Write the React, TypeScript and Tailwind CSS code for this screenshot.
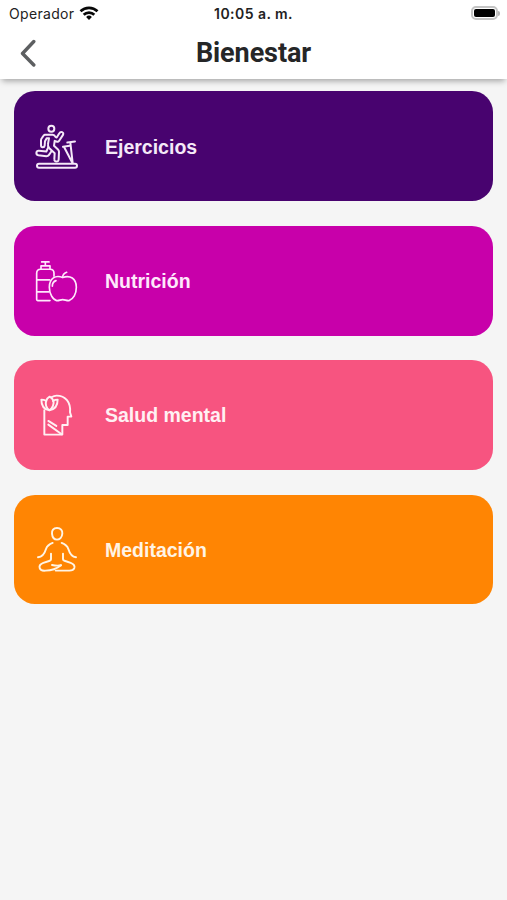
import React from "react";

type WellnessItem = {
  title: string;
  color: string;
  titleClass: string;
  icon: React.ReactNode;
};

type IconProps = {
  viewBox: string;
  strokeWidth?: number;
  children: React.ReactNode;
};

const LineIcon = ({ viewBox, strokeWidth = 6, children }: IconProps) => (
  <svg viewBox={viewBox} className="h-[60px] w-[60px] shrink-0" fill="none" stroke="currentColor" strokeWidth={strokeWidth} strokeLinecap="round" strokeLinejoin="round" aria-hidden="true">
    {children}
  </svg>
);

const TreadmillIcon = () => (
  <LineIcon viewBox="0 2.5 180 180">
    <circle cx="70" cy="41" r="9" />
    <path d="M50 59h24c4 0 7 3 9 7l3 1 8-13c4-7 15-3 11 5L94 76c-2 4-6 5-9 3l-5-2-2 15 12 11c2 2 3 4 3 7l-1 23c-1 9-14 8-13-1l1-18-16-15c-4-4-5-7-4-12l3-18h-7l-5 9-1 13c-1 7-11 7-11-1V75c0-3 1-5 3-7l5-7c1-1 2-2 4-2z" />
    <path d="M60 98l-5 11-22-2c-9-1-11 11-2 13l24 3c3 0 6-1 8-4l7-10" />
    <rect x="27" y="146" width="120" height="12" rx="6" />
    <path d="M141 79l-23 3M127 82l7 61M105 95l20-3M109 97l24 46" />
  </LineIcon>
);

const NutritionIcon = () => (
  <LineIcon viewBox="0 2.2 180 180" strokeWidth={5}>
    <path d="M41 35h22M52 35v11M39 57V47h27v10" />
    <path d="M66 151H29c-2 0-3-1-3-3V69c0-8 5-12 12-12h28c8 0 12 4 12 12v9M26 89h39M26 125h36" />
    <path d="M104 82c-21-9-40 2-40 29 0 19 10 37 22 40 7 1 11-3 18-3s12 4 19 3c13-4 22-20 22-40 0-26-19-38-41-29z" />
    <path d="M104 81c0-7 4-12 12-15M73 108c0-9 4-15 11-17" />
  </LineIcon>
);

const MindIcon = () => (
  <LineIcon viewBox="0 0.2 180 180" strokeWidth={5.8}>
    <path d="M49 76v73h54v-29h16V95h11l-4-13c3-30-14-50-40-50-7 0-11 2-16 5" />
    <path d="M64 76c-10-7-13-20-9-29 1-5 5-9 10-12 6 3 9 7 11 12 3 9-2 23-12 29z" />
    <path d="M55 48c-6-3-11-4-15-4 0 20 7 30 24 32 17-2 25-12 25-32-5 0-9 1-14 4" />
    <path d="M61 108l24 15M61 119l40 29" />
  </LineIcon>
);

const MeditationIcon = () => (
  <LineIcon viewBox="0 -1.8 180 180" strokeWidth={5.8}>
    <path d="M87 25c-11 0-16 8-15 17 1 11 7 18 15 18s15-7 16-18c1-9-5-17-16-17z" />
    <path d="M74 70c-12 5-17 9-20 18-4 13-10 24-24 25M101 70c12 5 17 9 20 18 4 13 10 24 23 25" />
    <path d="M69 102v16c0 4-3 6-8 7l-15 5c-8 3-13 8-11 15 2 7 10 9 18 8 19 0 31-4 46-16" />
    <path d="M105 102v16c0 4 4 6 9 7l14 5c8 3 13 8 11 15-2 6-8 8-15 8H83M99 137c-10 2-18 1-27-1" />
  </LineIcon>
);

const items: WellnessItem[] = [
  { title: "Ejercicios", color: "bg-[#48036f]", titleClass: "text-[#f5e9f8]", icon: <TreadmillIcon /> },
  { title: "Nutrición", color: "bg-[#c800aa]", titleClass: "text-[#ffe8fc]", icon: <NutritionIcon /> },
  { title: "Salud mental", color: "bg-[#f75480]", titleClass: "text-[#fff0f3]", icon: <MindIcon /> },
  { title: "Meditación", color: "bg-[#ff8503]", titleClass: "text-[#fff4e5]", icon: <MeditationIcon /> },
];

const StatusBar = () => (
  <div className="grid h-[26px] grid-cols-3 items-center pr-[7px] pl-[9px] font-[Inter,sans-serif] text-[#222]">
    <div className="flex items-center gap-[5px]">
      <span className="text-[14px] tracking-[0.32px]">Operador</span>
      <svg viewBox="0 0 20 15" className="h-[15px] w-5" fill="none" stroke="#080808" strokeWidth="2.7" aria-hidden="true">
        <path d="M1.5 5.2a12.3 12.3 0 0 1 17 0M4.7 8.7a7.6 7.6 0 0 1 10.6 0" />
        <path d="M7.1 11a4.2 4.2 0 0 1 5.8 0L10 14z" fill="#080808" stroke="none" />
      </svg>
    </div>
    <span className="-ml-0.5 text-center text-[14px] font-semibold tracking-[0.45px] whitespace-nowrap">10:05 a. m.</span>
    <div className="flex items-center justify-end">
      <div className="h-[14px] w-[27px] rounded-[5px] border-2 border-[#c4c4c4] p-px">
        <div className="h-full w-full rounded-[2px] bg-black" />
      </div>
      <div className="h-[5px] w-[2px] rounded-r-full bg-[#b5b5b5]" />
    </div>
  </div>
);

const Header = () => (
  <header className="relative bg-white shadow-[0_4px_6px_-2px_rgba(0,0,0,0.34)]">
    <StatusBar />
    <div className="grid h-[53px] grid-cols-[56px_1fr_56px] items-center">
      <button type="button" aria-label="Volver" className="flex justify-center text-[#5d5f61]">
        <svg viewBox="0 0 18 28" className="h-7 w-[18px]" fill="none" stroke="currentColor" strokeWidth="3.4" strokeLinecap="round" strokeLinejoin="round">
          <path d="M14.8 2.5L3.5 14.5 14.8 26" />
        </svg>
      </button>
      <h1 className="text-center font-[Roboto,sans-serif] text-[27px] leading-8 font-bold tracking-[-0.1px] text-[#252627]">Bienestar</h1>
    </div>
  </header>
);

const WellnessCard = ({ item }: { item: WellnessItem }) => (
  <button type="button" className={`flex h-[109.8px] w-full items-center rounded-[21px] pl-3.5 text-left ${item.color} ${item.titleClass}`}>
    {item.icon}
    <span className="ml-[17px] pt-0.5 font-['Liberation_Sans',sans-serif] text-[19.5px] font-bold">{item.title}</span>
  </button>
);

const App = () => {
  return (
    <div className="min-h-screen bg-[#f5f5f5]">
      <Header />
      <main className="flex flex-col gap-[24.6px] px-3.5 pt-[12.4px]">
        {items.map((item) => (
          <WellnessCard key={item.title} item={item} />
        ))}
      </main>
    </div>
  );
};

export default App;
